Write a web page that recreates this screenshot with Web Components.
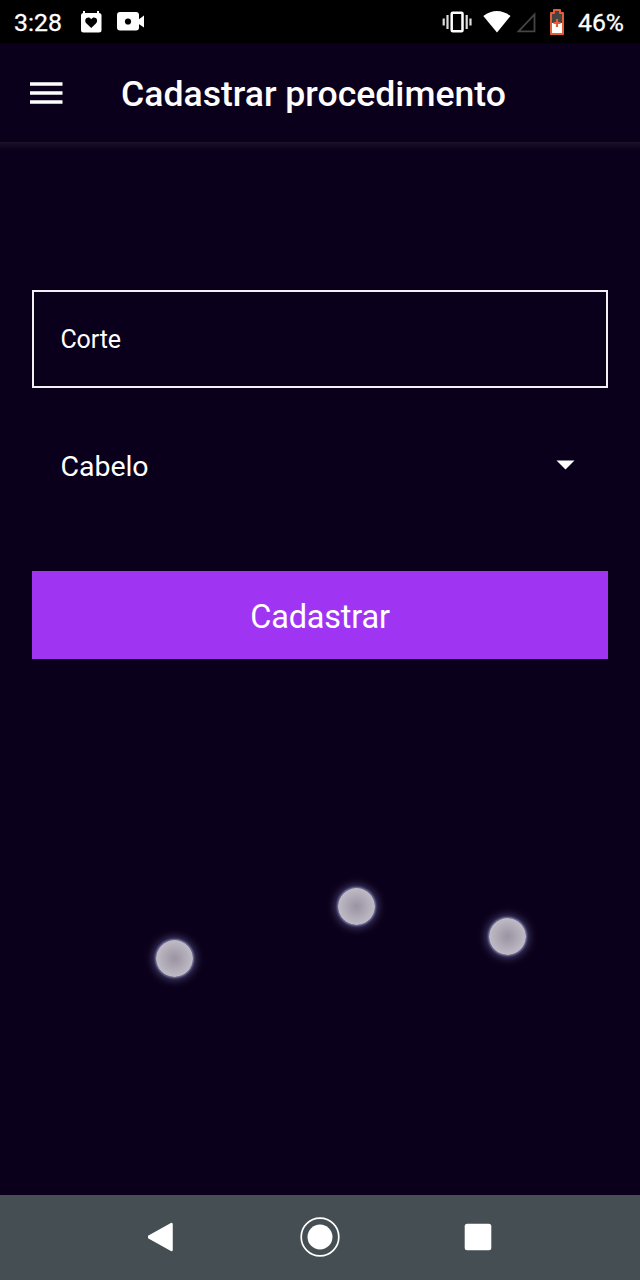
<!DOCTYPE html>
<html lang="pt-BR">
<head>
<meta charset="utf-8">
<title>Cadastrar procedimento</title>
<style>
html,body{margin:0;height:100%;background:#0b001b}
body{font-family:Roboto,"Noto Sans",sans-serif;color:#fff;overflow:hidden}
</style>
</head>
<body>
<app-screen>
  <status-bar slot="status" time="3:28" battery="46%"></status-bar>
  <app-header slot="header">Cadastrar procedimento</app-header>
  <text-field>Corte</text-field>
  <select-field>Cabelo</select-field>
  <primary-button>Cadastrar</primary-button>
  <touch-point slot="touch" style="left:356px;top:906px"></touch-point>
  <touch-point slot="touch" style="left:507px;top:936.5px"></touch-point>
  <touch-point slot="touch" style="left:174.5px;top:958.5px"></touch-point>
  <nav-bar slot="nav"></nav-bar>
</app-screen>
<script>
const define = (name, html) => customElements.define(name, class extends HTMLElement {
  constructor() {
    super();
    this.attachShadow({mode: 'open'}).innerHTML = html;
  }
  connectedCallback() {
    this.shadowRoot.querySelectorAll('[data-attr]').forEach(n => {
      n.textContent = this.getAttribute(n.dataset.attr) || '';
    });
  }
});

define('app-screen', `<style>
:host{display:flex;flex-direction:column;position:relative;width:640px;height:1280px;background:#0b001b;overflow:hidden}
main{flex:1;display:flex;flex-direction:column;padding:147px 32px 0;background:linear-gradient(#1c1229 0,#170d26 2px,#0b001b 8px)}
</style>
<slot name="status"></slot><slot name="header"></slot>
<main><slot></slot></main>
<slot name="touch"></slot><slot name="nav"></slot>`);

define('status-bar', `<style>
:host{display:flex;align-items:center;box-sizing:border-box;height:43px;padding:0 15px 0 14px;background:#000;font-size:24.800px;line-height:28px;font-weight:400;-webkit-text-stroke:.3px #fff}
span{padding-top:3px;width:48px;white-space:nowrap}
span + svg{margin-left:18px}
svg{display:block;flex:none}
.gap{flex:1}
</style>
<span data-attr="time"></span>
<svg width="22" height="24" viewBox="0 0 22 24"><path d="M4 1v4M18 1v4" stroke="#fff" stroke-width="2"/><rect x="1" y="3" width="20.500" height="19.500" rx="2.500" fill="#fff"/><path d="M11.200 18 6.500 13.500C2.700 9.100 8.600 5 11.200 9.200 13.800 5 19.700 9.100 15.900 13.500Z" fill="#000"/></svg>
<svg style="margin-left:15px" width="28" height="24" viewBox="0 0 28 24"><rect x="0" y="2" width="22" height="18.500" rx="3" fill="#fff"/><path d="M21 10 27 5.500V17.500L21 13.500Z" fill="#fff"/><circle cx="11" cy="11.500" r="3.100" fill="#000"/></svg>
<div class="gap"></div>
<svg width="30" height="24" viewBox="0 0 30 24"><rect x="9.700" y="2.700" width="10.800" height="18.600" rx="1" fill="none" stroke="#fff" stroke-width="2.500"/><path d="M5.500 5V19M24.700 5V19M1.700 8.500V15.500M28.500 8.500V15.500" stroke="#ddd" stroke-width="2.200"/></svg>
<svg style="margin-left:11px" width="28" height="24" viewBox="0 0 28 24"><path d="M.3 6Q14-3.800 27.500 6L14 22.500Z" fill="#fff"/></svg>
<svg style="margin-left:5px" width="21" height="24" viewBox="0 0 21 24"><path d="M2.500 21.300 18.500 4.500V21.300Z" fill="none" stroke="#454545" stroke-width="1.800"/></svg>
<svg style="margin-left:12px" width="16" height="26" viewBox="0 0 16 26"><path d="M5 1H11V4H14V25H2V4H5Z" fill="#444"/><path d="M2 14H14V25H2Z" fill="#fff"/><path d="M5 1H11V4H14V25H2V4H5Z" fill="none" stroke="#e55c35" stroke-width="2" stroke-linejoin="round"/><path d="M8 10V18M4.500 14H11.500" stroke="#e55c35" stroke-width="2.200"/></svg>
<span data-attr="battery" style="margin-left:13px;width:47px"></span>`);

define('app-header', `<style>
:host{display:flex;align-items:center;box-sizing:border-box;height:99px;padding:2px 30px 0;background:#0b001b;font-size:35.600px;line-height:42px;font-weight:500}
svg{display:block;margin:-2px 59px 0 0}
</style>
<svg width="33" height="22" viewBox="0 0 33 22"><path d="M0 2H32.500M0 11H32.500M0 20H32.500" stroke="#fff" stroke-width="3.500"/></svg>
<div style="margin-left:-1px"><slot></slot></div>`);

define('text-field', `<style>
:host{display:flex;align-items:center;box-sizing:border-box;height:98.400px;margin-top:1px;padding:2px 27px 0 26.500px;border:2px solid #f3f0f5;font-size:25px;letter-spacing:-.15px;line-height:30px}
</style><slot></slot>`);

define('select-field', `<style>
:host{display:flex;align-items:center;justify-content:space-between;height:60px;margin-top:48.600px;padding:0 33px 0 28.500px;font-size:28.500px;letter-spacing:-.05px;line-height:34px}
svg{display:block;margin-top:-3px}
</style><slot></slot>
<svg width="19" height="10" viewBox="0 0 19 10"><path d="M.5.5H18.500L9.500 9.500Z" fill="#fff"/></svg>`);

define('primary-button', `<style>
:host{display:flex;align-items:center;justify-content:center;box-sizing:border-box;height:88.700px;margin-top:73.700px;padding-top:4px;background:#9f35f3;font-size:32.500px;letter-spacing:-.2px;line-height:38px}
</style><slot></slot>`);

define('touch-point', `<style>
:host{display:block;position:absolute;width:37px;height:37px;margin:-18.500px 0 0 -18.500px;border-radius:50%;background:radial-gradient(circle closest-side,#9a93a3 0,#aaa5b1 45%,#c0bcc7 100%);box-shadow:0 0 2px 1px #7c79a8,0 0 8px 3px #47446f}
</style>`);

define('nav-bar', `<style>
:host{display:grid;grid-template-columns:repeat(3,158px);justify-content:center;align-items:center;height:85.400px;background:#454e53}
svg{display:block;justify-self:center}
</style>
<svg width="28" height="32" viewBox="1.500 0 28 32"><path d="M2 16 25 3V29Z" fill="#fff" stroke="#fff" stroke-width="2.500" stroke-linejoin="round"/></svg>
<svg width="42" height="42" viewBox="0 0 42 42"><circle cx="21" cy="21" r="18.800" fill="none" stroke="#fff" stroke-width="1.700"/><circle cx="21" cy="21" r="12.500" fill="#fff"/></svg>
<svg width="28" height="28" viewBox="0 0 28 28"><rect x=".7" y=".7" width="26.600" height="26.600" rx="2.500" fill="#fff"/></svg>`);
</script>
</body>
</html>
